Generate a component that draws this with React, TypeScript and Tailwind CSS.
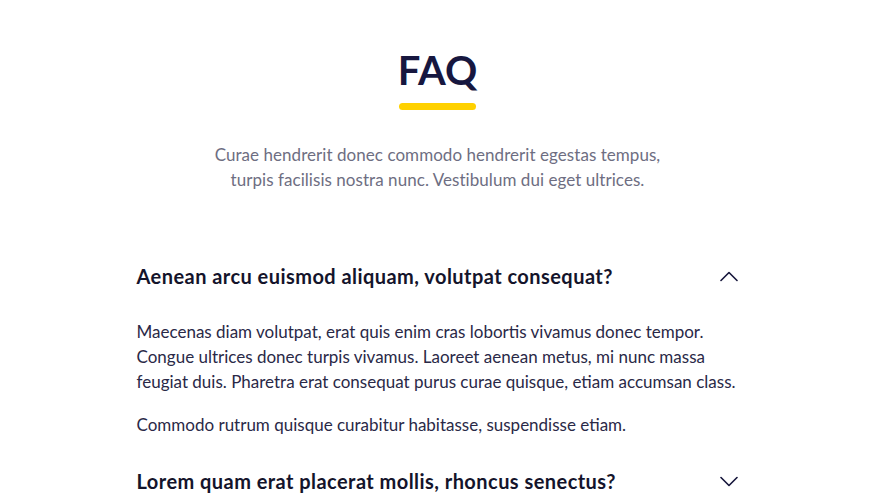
import React from "react";

function Chevron({ up }: { up?: boolean }) {
  return (
    <svg width="18" height="11" viewBox="0 0 18 11" fill="none" className="shrink-0 mr-[1px]">
      {up ? (
        <polyline points="1,9.5 9,1.5 17,9.5" stroke="#14143a" strokeWidth="1.6" strokeLinecap="round" strokeLinejoin="round" />
      ) : (
        <polyline points="1,1.5 9,9.5 17,1.5" stroke="#14143a" strokeWidth="1.6" strokeLinecap="round" strokeLinejoin="round" />
      )}
    </svg>
  );
}

export default function App() {
  const font = { fontFamily: "Lato, 'Noto Sans', sans-serif" };
  return (
    <div className="w-[890px] h-[499px] overflow-hidden bg-white" style={font}>
      <div className="w-[875px] flex flex-col items-center">
        <h1 className="mt-[50px] text-[40px] leading-[40px] font-bold text-[#17173f]">FAQ</h1>
        <div className="mt-[13px] w-[77px] h-[7px] rounded-full bg-[#ffd100]" />
        <p className="mt-[32px] text-center text-[17px] leading-[25px] tracking-[0.05px] text-[#6e6e82]">
          Curae hendrerit donec commodo hendrerit egestas tempus,
          <br />
          turpis facilisis nostra nunc. Vestibulum dui eget ultrices.
        </p>
        <div className="mt-[64px] w-[602px] flex flex-col">
          <div className="flex items-center justify-between h-[40px]">
            <span className="text-[20px] font-bold tracking-[0.45px] text-[#14142b]">Aenean arcu euismod aliquam, volutpat consequat?</span>
            <Chevron up />
          </div>
          <div className="mt-[23px] text-[17px] leading-[25px] text-[#2a2947]">
            <p>
              Maecenas diam volutpat, erat quis enim cras lobortis vivamus donec tempor. Congue ultrices donec turpis vivamus. Laoreet aenean metus, mi nunc massa feugiat duis. Pharetra erat consequat purus curae quisque, etiam accumsan class.
            </p>
            <p className="mt-[18px]">Commodo rutrum quisque curabitur habitasse, suspendisse etiam.</p>
          </div>
          <div className="mt-[24px] flex items-center justify-between h-[40px]">
            <span className="text-[20px] font-bold tracking-[0.45px] text-[#14142b]">Lorem quam erat placerat mollis, rhoncus senectus?</span>
            <Chevron />
          </div>
        </div>
      </div>
    </div>
  );
}
